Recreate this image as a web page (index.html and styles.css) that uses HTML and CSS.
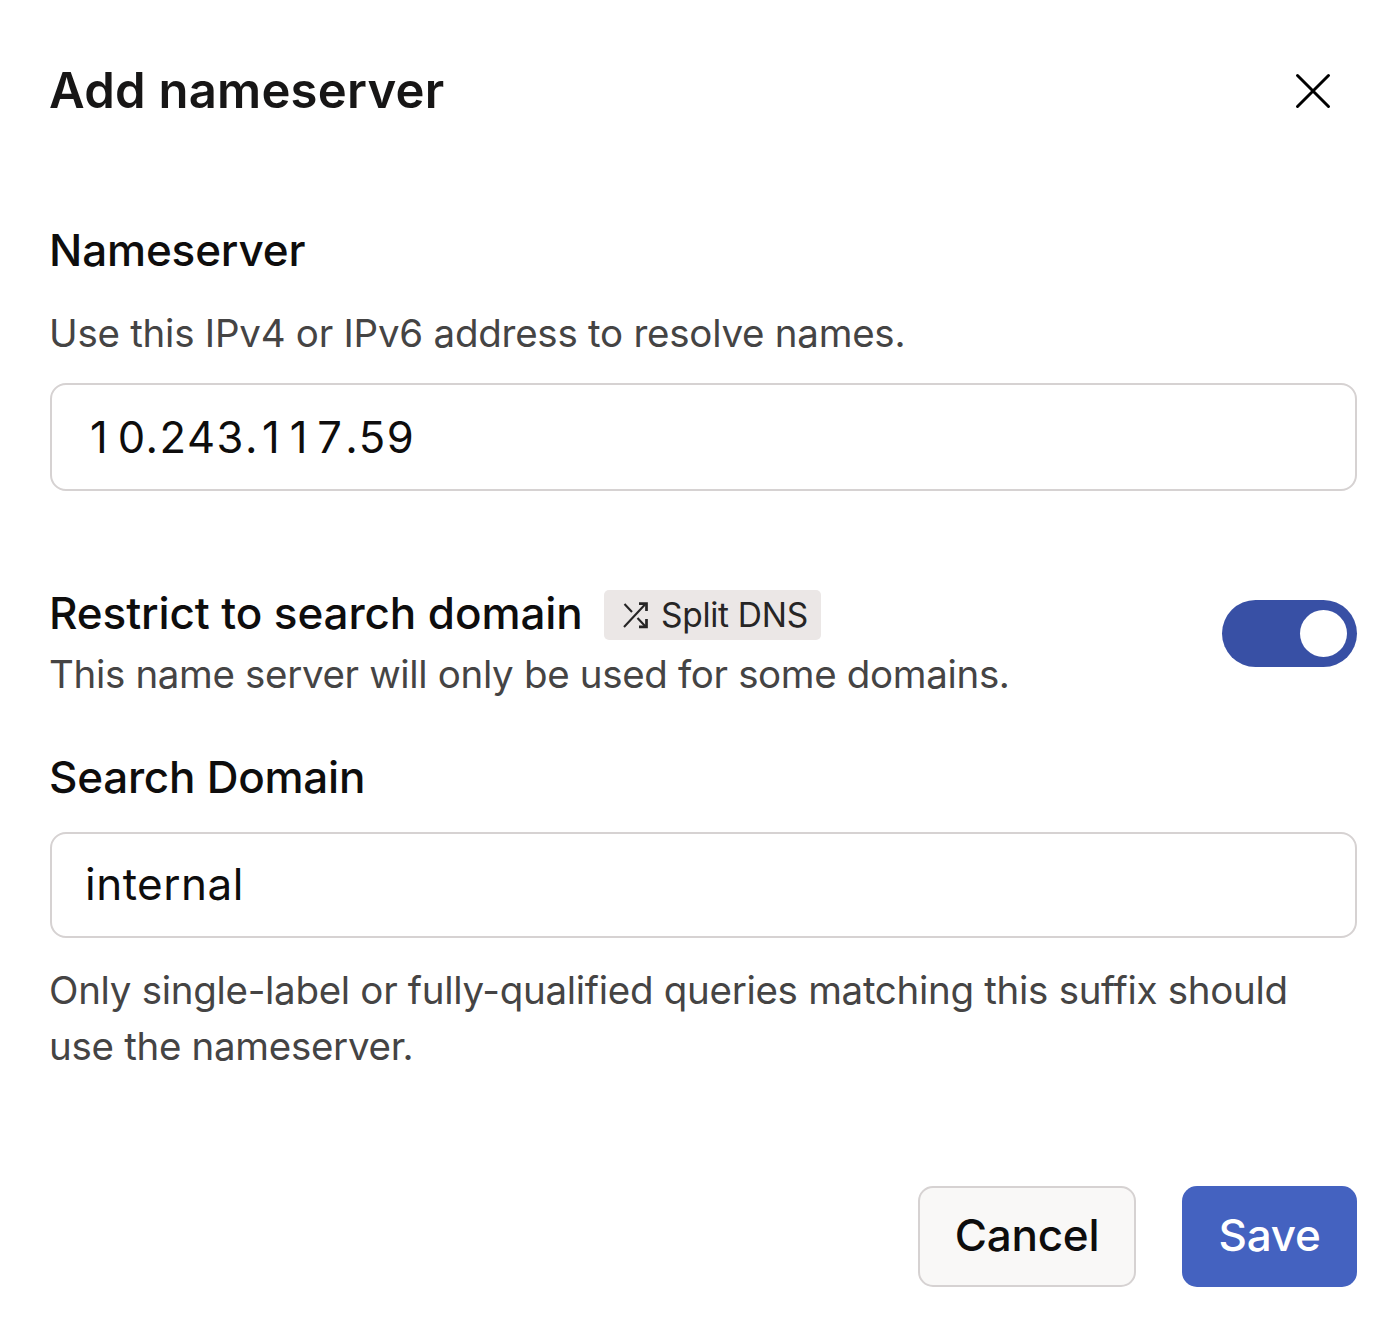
FILE: index.html
```html
<!DOCTYPE html>
<html lang="en">
<head>
<meta charset="utf-8">
<title>Add nameserver</title>
<link rel="stylesheet" href="styles.css">
</head>
<body>
<main class="dialog">
  <header class="header">
    <h1 class="title">Add nameserver</h1>
    <button class="close" aria-label="Close"><svg width="36" height="36" viewBox="0 0 36 36" fill="none" stroke="#000" stroke-width="3" stroke-linecap="round"><path d="M2.5 2.5l31 31M33.5 2.5l-31 31"/></svg></button>
  </header>
  <section class="field">
    <h2 class="label">Nameserver</h2>
    <p class="hint hint-address">Use this IPv4 or IPv6 address to resolve names.</p>
    <div class="input input-address" role="textbox" contenteditable="true" spellcheck="false" aria-label="Nameserver"><span class="one">1</span>0.243<span class="dot">.</span><span class="one">11</span><span class="seven">7</span>.59</div>
  </section>
  <section class="restrict">
    <div class="restrict-text">
      <div class="restrict-heading">
        <h2 class="label label-restrict">Restrict to search domain</h2>
        <span class="badge"><svg width="28" height="28" viewBox="0 0 28 28" fill="none" stroke="#262525"><path stroke-width="2.1" d="M2 26L23 3.500M2.500 3l7.500 8M15.500 17l8 8.500"/><path stroke-width="2.700" d="M17 2.700h7.500V10M24.500 18v7.800H17"/></svg><span class="badge-text">Split DNS</span></span>
      </div>
      <p class="hint hint-restrict">This name server will only be used for some domains.</p>
    </div>
    <button class="toggle" role="switch" aria-checked="true" aria-label="Restrict to search domain"><span class="knob"></span></button>
  </section>
  <section class="domain">
    <h2 class="label label-domain">Search Domain</h2>
    <input class="input input-domain" type="text" value="internal" aria-label="Search Domain">
    <p class="hint hint-domain">Only single-label or fully-qualified queries matching this suffix should use the nameserver.</p>
  </section>
  <footer class="actions">
    <button class="button cancel"><span class="cancel-text">Cancel</span></button>
    <button class="button save"><span class="save-text">Save</span></button>
  </footer>
</main>
</body>
</html>
```
FILE: styles.css
```css
* { box-sizing: border-box; }
body { margin: 0; background: #fff; font-family: Inter, sans-serif; color: #0e0d0d; }
h1, h2, p { margin: 0; white-space: nowrap; }
button { font: inherit; padding: 0; border: 0; }
.dialog { width: 1400px; height: 1337px; padding: 60px 43px 0 50px; }
.header { display: flex; justify-content: space-between; align-items: center; height: 62px; padding-right: 26px; }
.title { margin-left: -1px; font-size: 49px; font-weight: 600; line-height: 62px; letter-spacing: 0.25px; color: #171616; }
.close { display: flex; background: none; }
.field { margin-top: 98px; }
.label { margin-left: -1px; font-size: 44px; font-weight: 500; line-height: 60px; letter-spacing: -0.15px; }
.hint { margin-left: -1px; font-size: 38.5px; font-weight: 400; line-height: 56px; letter-spacing: -0.3px; color: #454444; }
.field .hint { margin-top: 25px; letter-spacing: -0.25px; }
.input { display: block; width: 1307px; border: 2px solid #d6d2d2; border-radius: 16px; font: 400 44px Inter, sans-serif; color: #0e0d0d; background: #fff; outline: 0; }
.input-address { height: 108px; margin-top: 22px; padding: 0 38px; font-size: 43.5px; line-height: 105px; letter-spacing: 1.5px; }
.one { letter-spacing: 10px; }
.dot { letter-spacing: 4.5px; }
.seven { letter-spacing: 3.3px; }
.restrict { display: flex; justify-content: space-between; margin-top: 93px; height: 118px; }
.restrict-heading { display: flex; align-items: center; width: 771px; height: 60px; }
.label-restrict { flex: 1; margin-top: -2px; letter-spacing: -0.1px; }
.badge { flex: none; display: flex; align-items: center; gap: 11px; width: 217px; height: 50px; padding-left: 18px; margin-top: 2px; border-radius: 5px; background: #ebe7e6; font-size: 33.5px; letter-spacing: -0.3px; white-space: nowrap; color: #262525; }
.badge-text { margin-top: -1px; }
.hint-restrict { margin-top: 2px; letter-spacing: -0.34px; }
.toggle { display: flex; align-items: center; justify-content: flex-end; width: 135px; height: 67px; margin-top: 16px; padding-right: 10px; border-radius: 34px; background: #3850a5; }
.knob { width: 47px; height: 47px; border-radius: 50%; background: #fff; }
.domain { margin-top: 45px; }
.label-domain { letter-spacing: -0.25px; }
.input-domain { height: 106px; margin-top: 25px; padding: 0 33px 2px; letter-spacing: 0.5px; }
.hint-domain { margin-top: 24px; white-space: normal; width: 1280px; }
.actions { display: flex; justify-content: flex-end; gap: 46px; margin-top: 112px; }
.button { height: 101px; padding-bottom: 3px; border-radius: 15px; font-size: 44px; font-weight: 500; letter-spacing: -0.25px; }
.cancel { width: 218px; border: 2px solid #d6d2d2; background: #f9f8f7; color: #0e0d0d; }
.save { width: 175px; background: #4462c0; color: #fff; }
```
